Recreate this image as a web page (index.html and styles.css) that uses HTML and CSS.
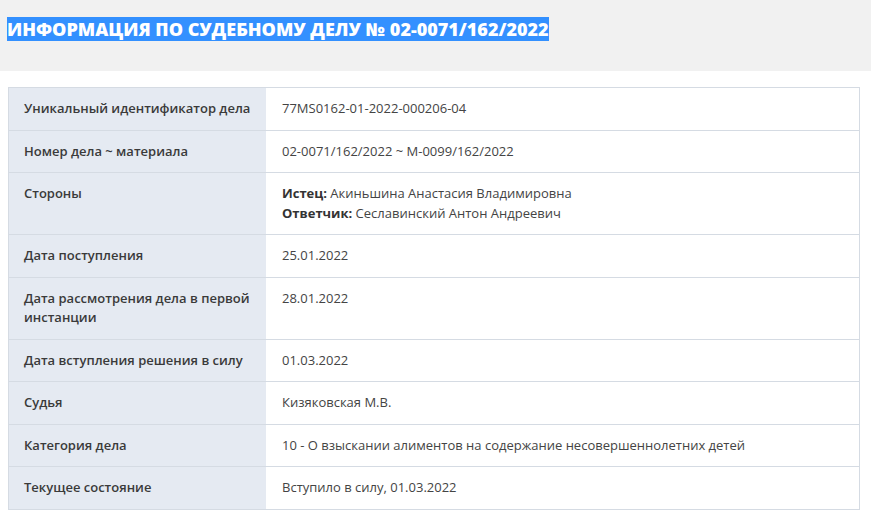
FILE: index.html
```html
<!DOCTYPE html>
<html lang="ru">
<head>
  <meta charset="UTF-8" />
  <title>Информация по судебному делу</title>
  <link rel="stylesheet" href="styles.css">
</head>
<body>

  <div class="page-header">
    <h1><span class="selected">Информация по судебному делу № 02-0071/162/2022</span></h1>
  </div>

  <div class="content">
    <table class="case-table">
      <tr>
        <th>Уникальный идентификатор дела</th>
        <td>77MS0162-01-2022-000206-04</td>
      </tr>
      <tr>
        <th>Номер дела ~ материала</th>
        <td>02-0071/162/2022 ~ М-0099/162/2022</td>
      </tr>
      <tr>
        <th>Стороны</th>
        <td>
          <b>Истец:</b> Акиньшина Анастасия Владимировна<br>
          <b>Ответчик:</b> Сеславинский Антон Андреевич
        </td>
      </tr>
      <tr>
        <th>Дата поступления</th>
        <td>25.01.2022</td>
      </tr>
      <tr>
        <th>Дата рассмотрения дела в первой инстанции</th>
        <td>28.01.2022</td>
      </tr>
      <tr>
        <th>Дата вступления решения в силу</th>
        <td>01.03.2022</td>
      </tr>
      <tr>
        <th>Судья</th>
        <td>Кизяковская М.В.</td>
      </tr>
      <tr>
        <th>Категория дела</th>
        <td>10 - О взыскании алиментов на содержание несовершеннолетних детей</td>
      </tr>
      <tr>
        <th>Текущее состояние</th>
        <td>Вступило в силу, 01.03.2022</td>
      </tr>
    </table>
  </div>

</body>
</html>
```

FILE: styles.css
```css
body {
  margin: 0;
  font-family: "Open Sans", Arial, sans-serif;
  font-size: 13px;
  color: #444;
  background: #fff;
}
.page-header {
  background: #f1f1f1;
  height: 71px;
  padding: 17px 7px 0;
  box-sizing: border-box;
}
h1 {
  margin: 0;
  font-size: 18px;
  line-height: 24px;
  font-weight: 800;
  text-transform: uppercase;
  color: #fff;
}
.selected {
  background: #3390ff;
}
.content {
  padding: 16px 8px 10px;
}
.case-table {
  width: 852px;
  border-collapse: collapse;
  border: 1px solid #d5dbe3;
}
.case-table th,
.case-table td {
  padding: 11px 15px;
  line-height: 1.5;
  text-align: left;
  vertical-align: top;
  border-bottom: 1px solid #d5dbe3;
}
.case-table th {
  width: 227px;
  background: #e5eaf2;
  font-weight: 600;
  color: #3a3a3a;
}
.case-table td {
  padding-left: 16px;
  background: #fff;
}
.case-table b {
  color: #333;
  font-weight: 700;
}
```
